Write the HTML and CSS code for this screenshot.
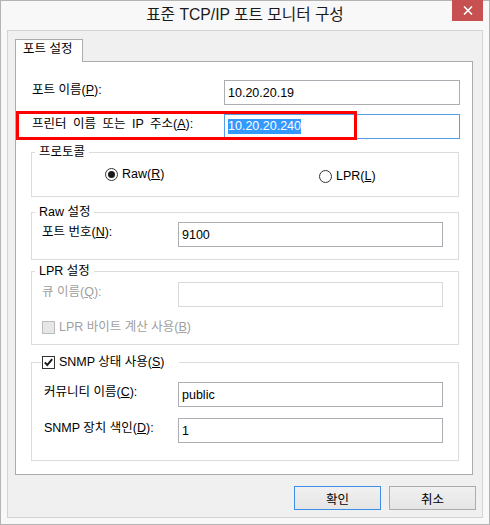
FILE: index.html
```html
<!DOCTYPE html>
<html lang="ko">
<head>
    <meta charset="UTF-8">
    <title>표준 TCP/IP 포트 모니터 구성</title>
    <link rel="stylesheet" href="styles.css">
</head>
<body>
    <div class="window">
        <div class="titlebar">
            <span class="title">표준 TCP/IP 포트 모니터 구성</span>
            <button class="close-btn" aria-label="닫기">
                <svg width="10" height="9" viewBox="0 0 10 9">
                    <path d="M1 0.5 L9 8.5 M9 0.5 L1 8.5" stroke="#fff" stroke-width="1.6" fill="none"/>
                </svg>
            </button>
        </div>

        <div class="client">
            <div class="tabs">
                <div class="tab">포트 설정</div>
            </div>

            <div class="panel">
                <div class="row row-first">
                    <span class="row-label">포트 이름(<u>P</u>):</span>
                    <div class="textbox wide">10.20.20.19</div>
                </div>

                <div class="row row-second">
                    <span class="row-label">프린터 이름 또는 IP 주소(<u>A</u>):</span>
                    <div class="textbox wide focused"><span class="selected">10.20.20.240</span></div>
                    <div class="annotation"></div>
                </div>

                <fieldset class="group group-protocol">
                    <legend>프로토콜</legend>
                    <div class="radio-row">
                        <span class="radio-item raw"><span class="radio checked"></span><span>Raw(<u>R</u>)</span></span>
                        <span class="radio-item lpr"><span class="radio"></span><span>LPR(<u>L</u>)</span></span>
                    </div>
                </fieldset>

                <fieldset class="group group-raw">
                    <legend>Raw 설정</legend>
                    <div class="group-row">
                        <span class="group-label">포트 번호(<u>N</u>):</span>
                        <div class="textbox">9100</div>
                    </div>
                </fieldset>

                <fieldset class="group group-lpr">
                    <legend>LPR 설정</legend>
                    <div class="group-row">
                        <span class="group-label disabled">큐 이름(<u>Q</u>):</span>
                        <div class="textbox disabled-box"></div>
                    </div>
                    <div class="check-row disabled">
                        <span class="checkbox disabled-check"></span>
                        <span>LPR 바이트 계산 사용(<u>B</u>)</span>
                    </div>
                </fieldset>

                <fieldset class="group group-snmp">
                    <legend class="legend-check">
                        <span class="check-row">
                            <span class="checkbox">
                                <svg width="11" height="11" viewBox="0 0 11 11">
                                    <path d="M1.8 5.4 L4.3 8 L9.2 2.2" stroke="#1e1e1e" stroke-width="2" fill="none"/>
                                </svg>
                            </span>
                            <span>SNMP 상태 사용(<u>S</u>)</span>
                        </span>
                    </legend>
                    <div class="group-row indent">
                        <span class="group-label">커뮤니티 이름(<u>C</u>):</span>
                        <div class="textbox">public</div>
                    </div>
                    <div class="group-row indent row-gap">
                        <span class="group-label">SNMP 장치 색인(<u>D</u>):</span>
                        <div class="textbox">1</div>
                    </div>
                </fieldset>
            </div>

            <div class="buttons">
                <button class="btn btn-default">확인</button>
                <button class="btn">취소</button>
            </div>
        </div>
    </div>
</body>
</html>
```

FILE: styles.css
```css
* {
    margin: 0;
    padding: 0;
    box-sizing: border-box;
}

body {
    font-family: "Liberation Sans", "Noto Sans CJK KR", sans-serif;
    font-size: 12.5px;
    line-height: 16px;
    color: #000;
    background: #fff;
}

u {
    text-decoration: underline;
    text-underline-offset: 1px;
}

/* window frame */
.window {
    width: 490px;
    height: 525px;
    border: 1px solid #b4b4b4;
    background: #f8f8f8;
    display: flex;
    flex-direction: column;
    position: relative;
}

.titlebar {
    height: 29px;
    display: flex;
    align-items: center;
    justify-content: center;
    padding-bottom: 1px;
}

.title {
    font-size: 15.7px;
    color: #1a1a1a;
}

.close-btn {
    position: absolute;
    top: -1px;
    right: 6px;
    width: 31px;
    height: 21px;
    border: none;
    background: #c75050;
    display: flex;
    align-items: center;
    justify-content: center;
}

.client {
    flex: 1;
    margin: 0 6px 6px;
    border: 1px solid #d4d4d4;
    background: #f0f0f0;
    padding: 8px 0 0 7px;
}

/* tab */
.tabs {
    display: flex;
}

.tab {
    position: relative;
    z-index: 1;
    width: 68px;
    height: 23px;
    margin-bottom: -1px;
    border: 1px solid #acacac;
    border-bottom: none;
    background: #fff;
    padding: 1px 0 0 7px;
}

.panel {
    width: 458px;
    height: 414px;
    border: 1px solid #acacac;
    background: #fff;
    display: flex;
    flex-direction: column;
}

/* text rows */
.row {
    position: relative;
    display: flex;
    align-items: center;
    height: 25px;
    padding-left: 16px;
}

.row-first {
    margin-top: 18px;
}

.row-second {
    margin-top: 9px;
}

.row-label {
    width: 192px;
    margin-bottom: 5px;
}

.row-second .row-label {
    word-spacing: 3px;
}

.textbox {
    width: 265px;
    height: 25px;
    border: 1px solid #abadb3;
    background: #fff;
    padding-left: 3px;
    display: flex;
    align-items: center;
}

.textbox.wide {
    width: 236px;
}

.textbox.focused {
    border-color: #569de5;
}

.selected {
    background: #3399ff;
    color: #fff;
    line-height: 15px;
}

.textbox.disabled-box {
    border-color: #d9d9d9;
}

.annotation {
    position: absolute;
    left: 0;
    top: -3px;
    width: 341px;
    height: 29px;
    border: 3px solid #f00;
}

/* group boxes */
.group {
    margin: 0 13px 0 15px;
    border: 1px solid #dcdcdc;
    padding: 0 15px 0 10px;
    min-width: 0;
}

.group legend {
    margin-left: -7px;
    padding: 0 4px;
    line-height: 14px;
}

.group legend.legend-check {
    margin-left: -1px;
    padding: 0 14px 0 1px;
}

.group-protocol {
    margin-top: 6px;
    padding-top: 8px;
    padding-bottom: 15px;
}

.group-raw {
    margin-top: 8px;
    padding-top: 3px;
    padding-bottom: 12px;
}

.group-lpr {
    margin-top: 4px;
    padding-top: 4px;
    padding-bottom: 9px;
}

.group-snmp {
    margin-top: 9px;
    padding-top: 12px;
    padding-bottom: 17px;
}

.group-row {
    display: flex;
    align-items: center;
    height: 25px;
}

.group-row.indent .group-label {
    padding-left: 2px;
}

.group-row.row-gap {
    margin-top: 11px;
}

.group-label {
    width: 136px;
    margin-bottom: 5px;
}

.disabled {
    color: #a0a0a0;
}

/* radio buttons */
.radio-row {
    display: flex;
    height: 14px;
    padding-left: 63px;
}

.radio-item {
    display: flex;
    align-items: center;
    gap: 4px;
    height: 14px;
}

.radio-item.raw {
    width: 214px;
}

.radio-item.lpr {
    margin-top: 2px;
}

.radio {
    width: 13px;
    height: 13px;
    border: 1px solid #333;
    border-radius: 50%;
    background: #fff;
    display: flex;
    align-items: center;
    justify-content: center;
}

.radio.checked::after {
    content: "";
    width: 7px;
    height: 7px;
    border-radius: 50%;
    background: #1a1a1a;
}

/* check boxes */
.check-row {
    display: flex;
    align-items: center;
    gap: 4px;
    height: 16px;
}

.group-lpr .check-row {
    margin-top: 12px;
}

.checkbox {
    width: 13px;
    height: 13px;
    border: 1px solid #333;
    background: #fff;
    display: flex;
    align-items: center;
    justify-content: center;
}

.checkbox.disabled-check {
    border-color: #bcbcbc;
    background: #e6e6e6;
}

/* dialog buttons */
.buttons {
    display: flex;
    justify-content: flex-end;
    gap: 8px;
    margin-top: 11px;
    padding-right: 6px;
}

.btn {
    width: 87px;
    height: 24px;
    border: 1px solid #acacac;
    background: linear-gradient(#f0f0f0, #e5e5e5);
    font-family: inherit;
    font-size: 12.5px;
    color: #000;
}

.btn-default {
    border-color: #3d8ee6;
}
```
